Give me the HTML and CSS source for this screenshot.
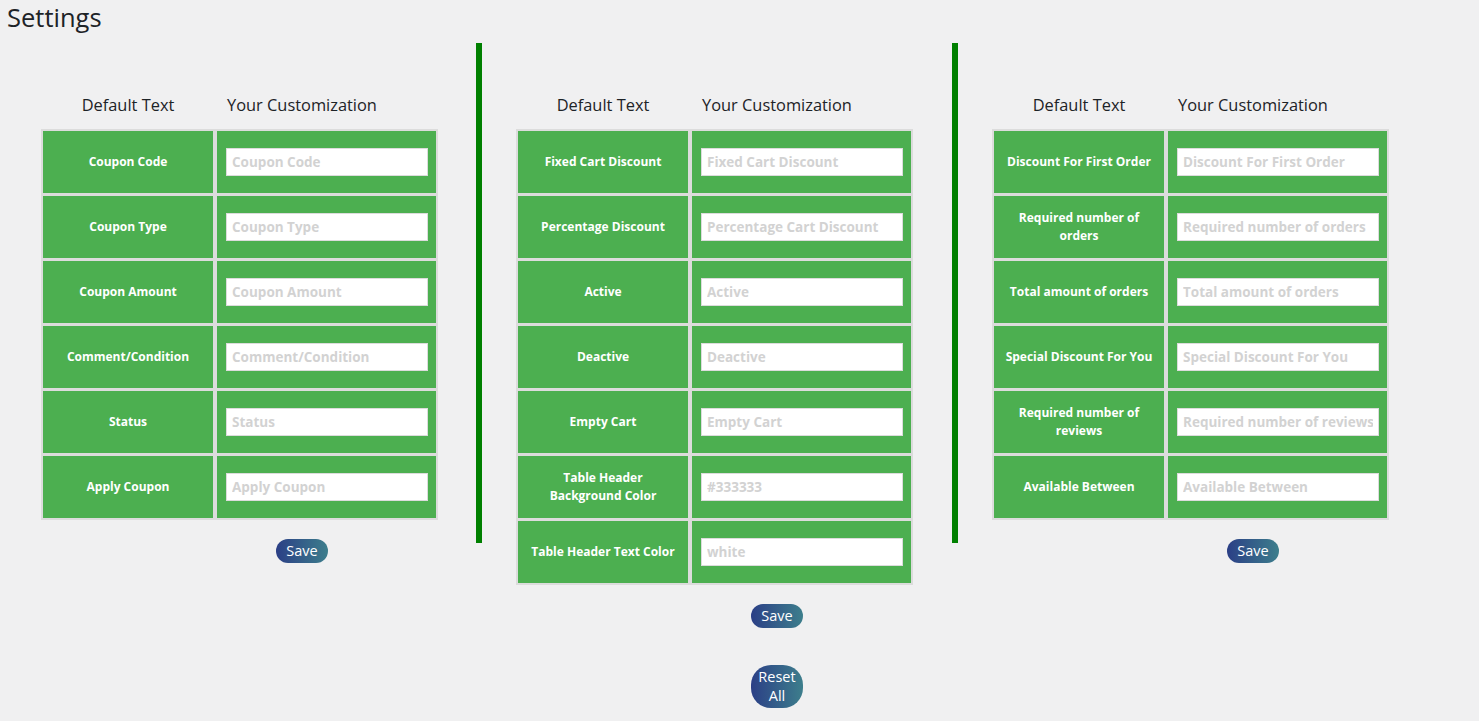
FILE: index.html
```html
<!DOCTYPE html>
<html lang="en">
<head>
<meta charset="utf-8">
<title>Settings</title>
<link rel="stylesheet" href="styles.css">
</head>
<body>
<h1 class="title">Settings</h1>
<div class="cols">
  <section class="col">
    <div class="head"><span class="h1c">Default Text</span><span class="h2c">Your Customization</span></div>
    <div class="tbl">
      <div class="lbl">Coupon Code</div><div class="fld"><input type="text" placeholder="Coupon Code"></div>
      <div class="lbl">Coupon Type</div><div class="fld"><input type="text" placeholder="Coupon Type"></div>
      <div class="lbl">Coupon Amount</div><div class="fld"><input type="text" placeholder="Coupon Amount"></div>
      <div class="lbl">Comment/Condition</div><div class="fld"><input type="text" placeholder="Comment/Condition"></div>
      <div class="lbl">Status</div><div class="fld"><input type="text" placeholder="Status"></div>
      <div class="lbl">Apply Coupon</div><div class="fld"><input type="text" placeholder="Apply Coupon"></div>
    </div>
    <button class="btn save">Save</button>
  </section>
  <section class="col sep">
    <div class="head"><span class="h1c">Default Text</span><span class="h2c">Your Customization</span></div>
    <div class="tbl">
      <div class="lbl">Fixed Cart Discount</div><div class="fld"><input type="text" placeholder="Fixed Cart Discount"></div>
      <div class="lbl">Percentage Discount</div><div class="fld"><input type="text" placeholder="Percentage Cart Discount"></div>
      <div class="lbl">Active</div><div class="fld"><input type="text" placeholder="Active"></div>
      <div class="lbl">Deactive</div><div class="fld"><input type="text" placeholder="Deactive"></div>
      <div class="lbl">Empty Cart</div><div class="fld"><input type="text" placeholder="Empty Cart"></div>
      <div class="lbl">Table Header Background Color</div><div class="fld"><input type="text" placeholder="#333333"></div>
      <div class="lbl">Table Header Text Color</div><div class="fld"><input type="text" placeholder="white"></div>
    </div>
    <button class="btn save">Save</button>
    <button class="btn reset">Reset All</button>
  </section>
  <section class="col sep">
    <div class="head"><span class="h1c">Default Text</span><span class="h2c">Your Customization</span></div>
    <div class="tbl">
      <div class="lbl">Discount For First Order</div><div class="fld"><input type="text" placeholder="Discount For First Order"></div>
      <div class="lbl">Required number of orders</div><div class="fld"><input type="text" placeholder="Required number of orders"></div>
      <div class="lbl">Total amount of orders</div><div class="fld"><input type="text" placeholder="Total amount of orders"></div>
      <div class="lbl">Special Discount For You</div><div class="fld"><input type="text" placeholder="Special Discount For You"></div>
      <div class="lbl">Required number of reviews</div><div class="fld"><input type="text" placeholder="Required number of reviews"></div>
      <div class="lbl">Available Between</div><div class="fld"><input type="text" placeholder="Available Between"></div>
    </div>
    <button class="btn save">Save</button>
  </section>
</div>
</body>
</html>
```
FILE: styles.css
```css
html, body {
  margin: 0;
  padding: 0;
  background: #f0f0f1;
  font-family: "Open Sans", "Noto Sans", sans-serif;
  color: #1d2327;
}
.title {
  margin: 0 0 0 7px;
  font-size: 25.5px;
  font-weight: 400;
  line-height: 34px;
  color: #1d2327;
}
.cols {
  display: flex;
  align-items: flex-start;
  margin-top: 9px;
  padding-left: 7px;
}
.col {
  box-sizing: border-box;
  flex: none;
  width: 469px;
  min-height: 500px;
  padding: 51px 0 0 34px;
}
.col.sep {
  width: 476px;
  padding-left: 40px;
  background: linear-gradient(#008000, #008000) left top / 6px 500px no-repeat;
}
.head {
  display: flex;
  font-size: 16.4px;
  line-height: 22px;
  height: 22px;
  margin-bottom: 13px;
}
.h1c {
  width: 174px;
  text-align: center;
}
.h2c {
  padding-left: 12px;
}
.tbl {
  display: grid;
  width: max-content;
  grid-template-columns: 170px 219px;
  grid-auto-rows: 62px;
  column-gap: 4px;
  row-gap: 3px;
  padding: 2px;
  background: #dcdcdc;
}
.lbl {
  background: #4caf50;
  color: #fff;
  font-weight: 700;
  font-size: 12px;
  line-height: 18px;
  display: flex;
  align-items: center;
  justify-content: center;
  text-align: center;
  padding: 0 9px;
}
.fld {
  background: #4caf50;
  display: flex;
  align-items: center;
  padding: 0 8px 0 9px;
}
.fld input {
  box-sizing: border-box;
  width: 100%;
  height: 28px;
  margin: 0;
  border: 1px solid #dcdcdc;
  border-radius: 0;
  background: #fff;
  padding: 0 5px;
  font-family: "Open Sans", "Noto Sans", sans-serif;
  font-size: 13.5px;
  font-weight: 700;
  color: #333;
  outline: none;
}
.fld input::placeholder {
  color: #d2d2d2;
  opacity: 1;
}
.btn {
  display: block;
  box-sizing: border-box;
  width: 52px;
  margin: 0 0 0 235px;
  padding: 2px 0;
  border: 0;
  border-radius: 20px;
  background: linear-gradient(90deg, #2b3f86, #3d7e8c);
  color: #fff;
  font-family: "Open Sans", "Noto Sans", sans-serif;
  font-size: 14.5px;
  line-height: 19.5px;
  text-align: center;
  cursor: pointer;
}
.save {
  margin-top: 19px;
}
.reset {
  margin-top: 37px;
}
```
